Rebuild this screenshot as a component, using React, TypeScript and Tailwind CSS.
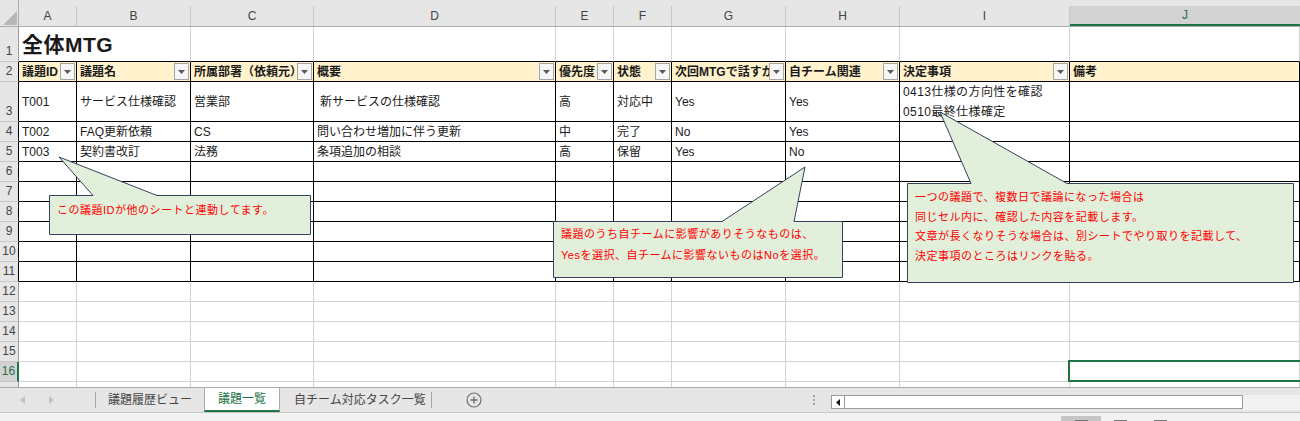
import React from "react";

const colW = [
  "w-[58px]",
  "w-[114px]",
  "w-[123px]",
  "w-[242px]",
  "w-[58px]",
  "w-[58px]",
  "w-[114px]",
  "w-[114px]",
  "w-[170px]",
  "w-[230px]",
];
const letters = ["A", "B", "C", "D", "E", "F", "G", "H", "I", "J"];

const headers = [
  "議題ID",
  "議題名",
  "所属部署（依頼元）",
  "概要",
  "優先度",
  "状態",
  "次回MTGで話すか",
  "自チーム関連",
  "決定事項",
  "備考",
];

const data: Record<number, React.ReactNode[]> = {
  3: [
    "T001",
    "サービス仕様確認",
    "営業部",
    <span className="pl-[3px]">新サービスの仕様確認</span>,
    "高",
    "対応中",
    "Yes",
    "Yes",
    <div className="flex flex-col leading-[20px] tracking-[0.4px]">
      <span>0413仕様の方向性を確認</span>
      <span>0510最終仕様確定</span>
    </div>,
    "",
  ],
  4: ["T002", "FAQ更新依頼", "CS", "問い合わせ増加に伴う更新", "中", "完了", "No", "Yes", "", ""],
  5: ["T003", "契約書改訂", "法務", "条項追加の相談", "高", "保留", "Yes", "No", "", ""],
};

const rows = [1, 2, 3, 4, 5, 6, 7, 8, 9, 10, 11, 12, 13, 14, 15, 16];

function Filter() {
  return (
    <span className="absolute right-[1px] top-[1px] w-[15px] h-[17px] border border-[#a6a6a6] bg-[#f6f6f6] flex items-center justify-center">
      <svg width="7" height="4" viewBox="0 0 7 4">
        <path d="M0 0h7L3.5 4z" fill="#5a5a5a" />
      </svg>
    </span>
  );
}

function cellBorder(n: number, i: number) {
  if (n === 1)
    return i === 0
      ? "border-b border-b-black"
      : "border-b border-b-black border-r border-r-[#d4d4d4]";
  if (n >= 2 && n <= 11) return "border-b border-r border-black";
  return "border-b border-r border-[#d4d4d4]";
}

function SheetRow({ n }: { n: number }) {
  const h = n === 1 ? "h-[35px]" : n === 3 ? "h-[40px]" : "h-[20px]";
  const selected = n === 16;
  return (
    <div className={`flex ${h}`}>
      <div
        className={`w-[19px] shrink-0 border-b border-b-[#c6c6c6] flex items-end justify-center pb-[1px] text-[12px] ${
          selected
            ? "bg-[#d2d2d2] text-[#217346] border-r-2 border-r-[#217346]"
            : n >= 2 && n <= 11
              ? "bg-[#e6e6e6] text-[#444] border-r border-r-black"
              : "bg-[#e6e6e6] text-[#444] border-r border-r-[#9b9b9b]"
        }`}
      >
        {n}
      </div>
      {colW.map((w, i) => (
        <div
          key={i}
          className={`${w} shrink-0 relative flex items-center whitespace-nowrap px-[3px] ${cellBorder(n, i)} ${
            n === 2 ? "bg-[#fff2cc] font-bold" : ""
          } ${n === 1 || n === 16 ? "" : "overflow-hidden"}`}
        >
          {n === 1 && i === 0 && (
            <span className="text-[21px] font-bold leading-none relative z-10 tracking-[0.5px]">
              全体MTG
            </span>
          )}
          {n === 2 && (
            <>
              <span>{headers[i]}</span>
              {i < 9 && <Filter />}
            </>
          )}
          {data[n] && data[n][i]}
          {selected && i === 9 && (
            <span className="absolute left-[-2px] top-[-2px] right-[-10px] bottom-[-1px] border-2 border-[#217346]" />
          )}
        </div>
      ))}
    </div>
  );
}

export default function App() {
  return (
    <div className="w-[1300px] h-[421px] overflow-hidden bg-white relative font-['Liberation_Sans','Noto_Sans_CJK_JP',sans-serif] text-[12px] text-[#1a1a1a]">
      {/* column letters */}
      <div className="flex h-[27px] bg-[#e6e6e6] border-b border-[#ababab]">
        <div className="w-[19px] shrink-0 h-full border-r border-[#ababab]">
          <svg width="19" height="26" viewBox="0 0 19 26">
            <path d="M17 11v14H3z" fill="#b7b7b7" />
          </svg>
        </div>
        {colW.map((w, i) => (
          <div key={i} className={`${w} shrink-0 h-full flex items-end`}>
            <div
              className={`w-full h-[20px] flex items-center justify-center ${
                i === 9
                  ? "bg-[#d2d2d2] text-[#217346] border-b-2 border-[#217346]"
                  : "border-r border-[#c8c8c8] text-[#444]"
              }`}
            >
              {letters[i]}
            </div>
          </div>
        ))}
      </div>

      {rows.map((n) => (
        <SheetRow key={n} n={n} />
      ))}

      {/* partial row 17 */}
      <div className="flex h-[5px]">
        <div className="w-[19px] shrink-0 bg-[#e6e6e6] border-r border-[#9b9b9b]" />
        {colW.map((w, i) => (
          <div key={i} className={`${w} shrink-0 border-r border-[#d4d4d4]`} />
        ))}
      </div>

      {/* sheet tabs */}
      <div className="flex h-[25px] bg-[#e6e6e6] border-t border-[#ababab] text-[12px]">
        <div className="w-[96px] shrink-0 flex items-center">
          <svg width="5" height="8" viewBox="0 0 5 8" className="ml-[20px]">
            <path d="M5 0v8L0 4z" fill="#c2c2c2" />
          </svg>
          <svg width="5" height="8" viewBox="0 0 5 8" className="ml-[24px]">
            <path d="M0 0v8l5-4z" fill="#c2c2c2" />
          </svg>
          <div className="ml-auto w-px h-[16px] bg-[#a6a6a6]" />
        </div>
        <div className="w-[108px] shrink-0 flex items-center justify-center text-[#444]">議題履歴ビュー</div>
        <div className="w-[76px] shrink-0 bg-white border-x border-[#ababab] border-b-2 border-b-[#217346] flex items-center justify-center text-[#217346]">
          議題一覧
        </div>
        <div className="w-[152px] shrink-0 flex items-center text-[#444]">
          <span className="ml-[14px]">自チーム対応タスク一覧</span>
          <div className="ml-auto w-px h-[16px] bg-[#a6a6a6]" />
        </div>
        <div className="w-[399px] shrink-0 flex items-center">
          <svg width="16" height="16" viewBox="0 0 16 16" className="ml-[34px]">
            <circle cx="8" cy="8" r="7" fill="none" stroke="#6e6e6e" strokeWidth="1.2" />
            <path d="M8 4.5v7M4.5 8h7" stroke="#6e6e6e" strokeWidth="1.4" />
          </svg>
          <div className="ml-auto mr-[16px] flex flex-col gap-[2px]">
            <span className="w-[2px] h-[2px] bg-[#a8a8a8]" />
            <span className="w-[2px] h-[2px] bg-[#a8a8a8]" />
            <span className="w-[2px] h-[2px] bg-[#a8a8a8]" />
          </div>
        </div>
        <div className="w-[412px] shrink-0 pt-[7px]">
          <div className="h-[14px] flex border border-[#9a9a9a] bg-white">
            <div className="w-[13px] border-r border-[#9a9a9a] flex items-center justify-center">
              <svg width="4" height="7" viewBox="0 0 4 7">
                <path d="M4 0v7L0 3.5z" fill="#111" />
              </svg>
            </div>
          </div>
        </div>
        <div className="flex-1 pt-[7px]">
          <div className="h-[15px] bg-[#f2f2f2]" />
        </div>
      </div>

      {/* status bar */}
      <div className="flex h-[9px] bg-[#f2f2f2] border-t border-[#c6c6c6]">
        <div className="w-[1061px] shrink-0" />
        <div className="w-[40px] shrink-0 mt-[3px] bg-[#c6c6c6] flex items-end justify-center">
          <span className="w-[13px] h-[1px] bg-[#777]" />
        </div>
        <span className="ml-[13px] w-[13px] h-[1px] mt-auto bg-[#777]" />
        <span className="ml-[27px] w-[13px] h-[1px] mt-auto bg-[#777]" />
      </div>

      {/* callouts */}
      <svg
        width="1300"
        height="421"
        viewBox="0 0 1300 421"
        className="absolute left-0 top-0 pointer-events-none"
      >
        <path
          d="M49.5 195.5H93L59 157L157 195.5H310.5V234.5H49.5Z"
          fill="#e2efda"
          stroke="#34425e"
          strokeWidth="1"
        />
        <path
          d="M553.5 221.5H722L805 167L794 221.5H842.5V277.5H553.5Z"
          fill="#e2efda"
          stroke="#34425e"
          strokeWidth="1"
        />
        <path
          d="M907.5 183.5H971L940 112L1067 183.5H1293.5V282.5H907.5Z"
          fill="#e2efda"
          stroke="#34425e"
          strokeWidth="1"
        />
      </svg>
      <div className="absolute left-[57px] top-[200px] leading-[20px] text-[11px] tracking-[0.5px] text-[#ff0000] whitespace-nowrap">
        この議題IDが他のシートと連動してます。
      </div>
      <div className="absolute left-[561px] top-[224px] leading-[21px] text-[11px] tracking-[0.5px] text-[#ff0000] whitespace-nowrap">
        <div>議題のうち自チームに影響がありそうなものは、</div>
        <div>Yesを選択、自チームに影響ないものはNoを選択。</div>
      </div>
      <div className="absolute left-[915px] top-[188px] leading-[19.6px] text-[11px] tracking-[0.5px] text-[#ff0000] whitespace-nowrap">
        <div>一つの議題で、複数日で議論になった場合は</div>
        <div>同じセル内に、確認した内容を記載します。</div>
        <div>文章が長くなりそうな場合は、別シートでやり取りを記載して、</div>
        <div>決定事項のところはリンクを貼る。</div>
      </div>
    </div>
  );
}
